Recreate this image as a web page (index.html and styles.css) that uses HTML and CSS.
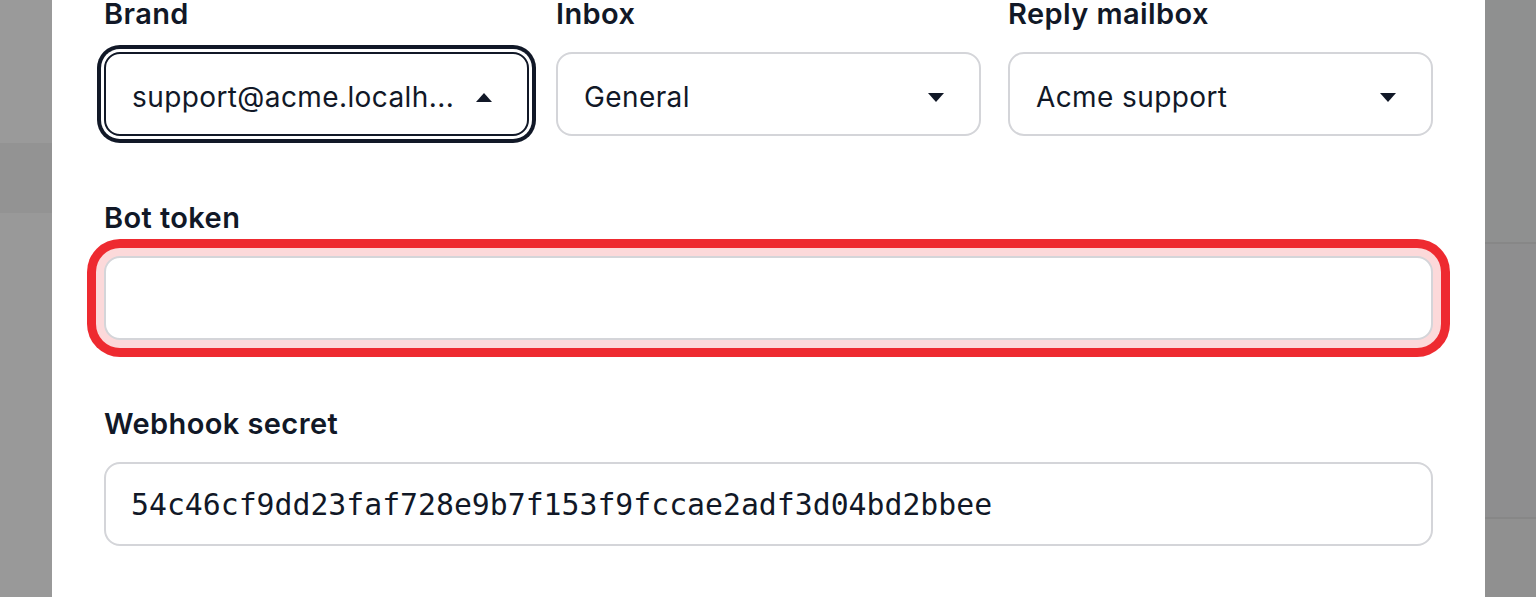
FILE: index.html
```html
<!DOCTYPE html>
<html lang="en">
<head>
<meta charset="utf-8">
<title>Channel settings</title>
<link rel="stylesheet" href="styles.css">
</head>
<body>
<div class="screen">
  <div class="backdrop backdrop-left">
    <div class="band band-a"></div>
    <div class="band band-b"></div>
    <div class="band band-c"></div>
  </div>
  <div class="modal">
    <form class="form">
      <div class="row3">
        <div class="field">
          <div class="label">Brand</div>
          <div class="select select-focus">
            <span class="value">support@acme.localh...</span>
            <svg class="caret" width="16" height="9" viewBox="0 0 16 9"><path d="M0 9 L8 0 L16 9 Z" fill="#111827"/></svg>
          </div>
        </div>
        <div class="field">
          <div class="label">Inbox</div>
          <div class="select">
            <span class="value">General</span>
            <svg class="caret" width="16" height="9" viewBox="0 0 16 9"><path d="M0 0 L16 0 L8 9 Z" fill="#111827"/></svg>
          </div>
        </div>
        <div class="field">
          <div class="label">Reply mailbox</div>
          <div class="select">
            <span class="value">Acme support</span>
            <svg class="caret" width="16" height="9" viewBox="0 0 16 9"><path d="M0 0 L16 0 L8 9 Z" fill="#111827"/></svg>
          </div>
        </div>
      </div>
      <div class="field field-gap">
        <div class="label">Bot token</div>
        <div class="input input-error"></div>
      </div>
      <div class="field field-gap2">
        <div class="label">Webhook secret</div>
        <div class="input mono">54c46cf9dd23faf728e9b7f153f9fccae2adf3d04bd2bbee</div>
      </div>
    </form>
  </div>
  <div class="backdrop backdrop-right">
    <div class="band band-d"></div>
    <div class="line"></div>
    <div class="band band-e"></div>
    <div class="line"></div>
    <div class="band band-f"></div>
  </div>
</div>
</body>
</html>
```

FILE: styles.css
```css
* { box-sizing: border-box; }
html, body { margin: 0; padding: 0; }
body {
  background: #939393;
  font-family: Inter, "Noto Sans", sans-serif;
  color: #111827;
  overflow: hidden;
}
.screen {
  display: flex;
  height: 597px;
  width: 1536px;
}
.backdrop {
  display: flex;
  flex-direction: column;
}
.backdrop-left { width: 52px; }
.backdrop-right { width: 51px; }
.band-a { height: 143px; background: #9a9a9a; }
.band-b { height: 70px; background: #939393; }
.band-c { flex: 1; background: #999999; }
.band-d { height: 242px; background: #8f9090; }
.band-e { height: 273px; background: #8e8e8f; }
.band-f { flex: 1; background: #909090; }
.line { height: 2px; background: #878787; }

.modal {
  flex: 1;
  background: #ffffff;
  padding: 0 52px;
  overflow: hidden;
}
.form {
  margin-top: -6px;
  display: flex;
  flex-direction: column;
}
.row3 {
  display: grid;
  grid-template-columns: repeat(3, 425px);
  column-gap: 27px;
}
.field { display: flex; flex-direction: column; }
.field-gap { margin-top: 62px; }
.field-gap2 { margin-top: 64px; }
.label {
  font-size: 29px;
  font-weight: 600;
  letter-spacing: 0.4px;
  line-height: 40px;
  margin-bottom: 18px;
  color: #111827;
}
.select, .input {
  height: 84px;
  border: 2px solid #d4d5d9;
  border-radius: 16px;
  background: #fff;
  display: flex;
  align-items: center;
}
.select {
  justify-content: space-between;
  padding: 6px 35px 0 26px;
  font-size: 28px;
  letter-spacing: 0.4px;
  line-height: 40px;
}
.value { white-space: nowrap; }
.select-focus {
  border-color: #111827;
  box-shadow: 0 0 0 3px #ffffff, 0 0 0 7px #111827;
}
.caret { display: block; flex: none; }
.input {
  padding: 0 25px;
}
.input-error {
  box-shadow: 0 0 0 8px #fcd9da, 0 0 0 17px #ee2a30;
}
.mono {
  font-family: "DejaVu Sans Mono", "Liberation Mono", monospace;
  font-size: 29.8px;
  color: #111827;
}
```
